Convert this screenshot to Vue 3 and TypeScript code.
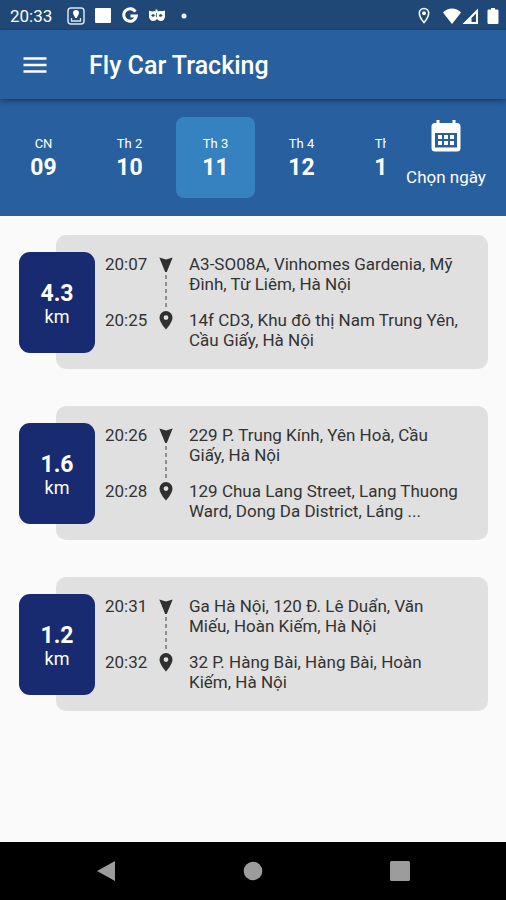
<script setup lang="ts">
import { ref } from 'vue'

interface Day {
  label: string
  date: string
}

interface Stop {
  time: string
  address: string
}

interface Trip {
  distance: string
  from: Stop
  to: Stop
}

const days: Day[] = [
  { label: 'CN', date: '09' },
  { label: 'Th 2', date: '10' },
  { label: 'Th 3', date: '11' },
  { label: 'Th 4', date: '12' },
  { label: 'Th 5', date: '13' },
]

const selected = ref('11')

const trips: Trip[] = [
  {
    distance: '4.3',
    from: { time: '20:07', address: 'A3-SO08A, Vinhomes Gardenia, Mỹ Đình, Từ Liêm, Hà Nội' },
    to: { time: '20:25', address: '14f CD3, Khu đô thị Nam Trung Yên, Cầu Giấy, Hà Nội' },
  },
  {
    distance: '1.6',
    from: { time: '20:26', address: '229 P. Trung Kính, Yên Hoà, Cầu Giấy, Hà Nội' },
    to: { time: '20:28', address: '129 Chua Lang Street, Lang Thuong Ward, Dong Da District, Láng ...' },
  },
  {
    distance: '1.2',
    from: { time: '20:31', address: 'Ga Hà Nội, 120 Đ. Lê Duẩn, Văn Miếu, Hoàn Kiếm, Hà Nội' },
    to: { time: '20:32', address: '32 P. Hàng Bài, Hàng Bài, Hoàn Kiếm, Hà Nội' },
  },
]
</script>

<template>
  <div class="screen">
    <div class="status">
      <span class="clock">20:33</span>
      <div class="notices">
        <svg width="18" height="18" viewBox="0 0 18 18" aria-hidden="true">
          <rect x="1" y="1" width="16" height="16" rx="3" fill="none" stroke="#dbe3ee" stroke-width="1.5" />
          <path d="M9 3a3 3 0 0 1 3 3c0 2-2 3-2 5H8c0-2-2-3-2-5a3 3 0 0 1 3-3z" fill="#fff" />
          <path d="M4.5 11v3h9v-3" fill="none" stroke="#dbe3ee" stroke-width="1.3" />
        </svg>
        <svg width="18" height="18" viewBox="0 0 18 18" aria-hidden="true">
          <rect x="1" y="1" width="16" height="15" rx="1" fill="#fff" />
        </svg>
        <svg width="18" height="18" viewBox="0 0 18 18" aria-hidden="true">
          <path d="M14.4 4.6A6.3 6.3 0 1 0 15.3 9H9.5" fill="none" stroke="#fff" stroke-width="3" />
        </svg>
        <svg width="18" height="18" viewBox="0 0 18 18" aria-hidden="true">
          <path
            d="M1 3.5c2 1 4 1.2 5.5 .5L7.5 4.500V2.500h2V4.500C12 3.500 15 4.500 17 3.500V9c0 3-2 5-4 5-1.600 0-3-1-4-2-1 1-2 2-3.500 2C3 14 1 12 1 9z"
            fill="#fff"
          />
          <path d="M3.500 8.500c1-1.400 2.500-1.400 3.200 0-.7 1.200-2.200 1.200-3.200 0zM11 8.500c.8-1.400 2.300-1.400 3.300 0-1 1.200-2.500 1.200-3.300 0zM8.500 6v4" fill="#1f4877" stroke="#1f4877" stroke-width=".7" />
        </svg>
        <svg width="18" height="18" viewBox="0 0 18 18" aria-hidden="true">
          <circle cx="9" cy="9" r="2.500" fill="#fff" />
        </svg>
      </div>
      <div class="signals">
        <svg class="location" width="12" height="18" viewBox="0 0 12 18" aria-hidden="true">
          <path d="M6 1.500a4.700 4.700 0 0 0-4.700 4.700C1.300 10 6 15.500 6 15.500s4.700-5.500 4.700-9.300A4.700 4.700 0 0 0 6 1.500z" fill="none" stroke="#fff" stroke-width="1.600" />
          <circle cx="6" cy="6.300" r="2" fill="#fff" />
        </svg>
        <svg width="20" height="18" viewBox="0 0 20 18" aria-hidden="true">
          <path d="M1 5.500C6 .3 14 .3 19 5.500L10 17z" fill="#fff" />
        </svg>
        <svg width="17" height="18" viewBox="0 0 17 18" aria-hidden="true">
          <path d="M16 1.500V17H.5z" fill="#fff" />
          <path d="M14 6.500V15H9.500v-4z" fill="#1f4877" />
        </svg>
        <svg class="battery" width="12" height="18" viewBox="0 0 12 18" aria-hidden="true">
          <path d="M4 1h4v1.500h2.300q1.200 0 1.200 1.200v12.100q0 1.200-1.200 1.200H1.700Q.5 17 .5 15.800V3.700q0-1.200 1.200-1.200H4z" fill="#fff" />
        </svg>
      </div>
    </div>

    <header class="bar">
      <button class="menu" type="button" aria-label="Menu">
        <svg width="24" height="18" viewBox="0 0 24 18" aria-hidden="true">
          <path d="M0.500 2.500h23M0.500 9h23M0.500 15.500h23" stroke="#fff" stroke-width="2.600" />
        </svg>
      </button>
      <h1>Fly Car Tracking</h1>
    </header>

    <section class="dates">
      <div class="days">
        <button
          v-for="day in days"
          :key="day.date"
          type="button"
          class="day"
          :class="{ active: day.date === selected }"
          @click="selected = day.date"
        >
          <span class="weekday">{{ day.label }}</span>
          <span class="number">{{ day.date }}</span>
        </button>
      </div>
      <button class="picker" type="button">
        <svg width="30" height="34" viewBox="0 0 30 34" aria-hidden="true">
          <path
            fill="#fff"
            fill-rule="evenodd"
            d="M5.500 1h3v3h13V1h3v3h1.500a3.500 3.500 0 0 1 3.500 3.500v21.500a3.500 3.500 0 0 1-3.500 3.500h-22a3.500 3.500 0 0 1-3.500-3.500v-21.500A3.500 3.500 0 0 1 4 4h1.500zM4 14v14.500h22v-14.500z"
          />
          <path
            fill="#fff"
            d="M7 16h4v4H7zM13 16h4v4h-4zM19 16h4v4h-4zM7 22h4v4H7zM13 22h4v4h-4zM19 22h4v4h-4z"
          />
        </svg>
        <span>Chọn ngày</span>
      </button>
    </section>

    <main class="trips">
      <article v-for="trip in trips" :key="trip.from.time" class="trip">
        <div class="distance">
          <strong>{{ trip.distance }}</strong>
          <span>km</span>
        </div>
        <div class="card">
          <time>{{ trip.from.time }}</time>
          <div class="route">
            <svg width="14" height="76" viewBox="0 0 14 76" aria-hidden="true">
              <path d="M0.300 3.500L7 5.500l6.700-2L7.800 18H6.200z" fill="#303030" />
              <path d="M7 21v35" stroke="#666" stroke-width="1.300" stroke-dasharray="4 3" />
              <path
                fill="#303030"
                fill-rule="evenodd"
                d="M7 57a6.500 6.500 0 0 0-6.500 6.500C.5 68.500 7 75.500 7 75.500s6.500-7 6.500-12A6.500 6.500 0 0 0 7 57zm0 4.200a2.400 2.400 0 1 1 0 4.800 2.400 2.400 0 0 1 0-4.800z"
              />
            </svg>
          </div>
          <p>{{ trip.from.address }}</p>
          <time>{{ trip.to.time }}</time>
          <p>{{ trip.to.address }}</p>
        </div>
      </article>
    </main>

    <nav class="system" aria-label="System">
      <button type="button" aria-label="Back">
        <svg width="20" height="22" viewBox="0 0 20 22" aria-hidden="true">
          <path d="M19 1v20L1 11z" fill="#9c9c9c" />
        </svg>
      </button>
      <button type="button" aria-label="Home">
        <svg width="20" height="20" viewBox="0 0 20 20" aria-hidden="true">
          <circle cx="10" cy="10" r="9.300" fill="#9c9c9c" />
        </svg>
      </button>
      <button type="button" aria-label="Recent apps">
        <svg width="20" height="20" viewBox="0 0 20 20" aria-hidden="true">
          <rect width="20" height="20" rx="1.500" fill="#9c9c9c" />
        </svg>
      </button>
    </nav>
  </div>
</template>

<style>
body {
  margin: 0;
}
</style>

<style scoped>
.screen {
  display: flex;
  flex-direction: column;
  min-height: 100vh;
  background: #fafafa;
  color: #333;
  font-family: Roboto, "Liberation Sans", sans-serif;
}

button {
  margin: 0;
  padding: 0;
  border: 0;
  background: none;
  color: inherit;
  font: inherit;
  cursor: pointer;
}

svg {
  display: block;
}

.status {
  display: flex;
  align-items: center;
  box-sizing: border-box;
  height: 30px;
  padding: 1px 7px 0 10px;
  background: #1f4877;
  color: #fff;
}

.clock {
  flex: 0 0 44px;
  font-size: 17px;
  line-height: 28px;
}

.notices {
  display: flex;
  gap: 9px;
  margin-left: 13px;
}

.signals {
  display: flex;
  margin-left: auto;
}

.location {
  margin-right: 12px;
}

.battery {
  margin-left: 8px;
}

.bar {
  position: relative;
  z-index: 1;
  display: flex;
  align-items: center;
  gap: 42px;
  height: 69px;
  padding: 0 23px;
  background: #285f9f;
  color: #fff;
  box-shadow: 0 2px 5px rgba(0, 0, 0, 0.4);
}

h1 {
  margin: 0;
  padding-top: 2px;
  font-size: 25px;
  font-weight: 500;
  line-height: 32px;
}

.dates {
  display: flex;
  height: 117px;
  background: #285f9f;
  color: #fff;
}

.days {
  display: flex;
  flex: 1;
  gap: 7px;
  min-width: 0;
  overflow: hidden;
  padding: 18px 0 18px 4px;
}

.day {
  display: flex;
  flex: 0 0 79px;
  flex-direction: column;
  align-items: center;
  justify-content: center;
  border-radius: 8px;
}

.day.active {
  background: #3681bf;
}

.weekday {
  font-size: 13px;
  line-height: 20px;
}

.number {
  font-size: 23px;
  font-weight: 700;
  line-height: 28px;
}

.picker {
  display: flex;
  flex: 0 0 120px;
  flex-direction: column;
  align-items: center;
  gap: 10px;
  padding-top: 20px;
  font-size: 17px;
  line-height: 28px;
}

.trips {
  display: flex;
  flex: 1;
  flex-direction: column;
  gap: 37px;
  padding: 19px 18px 37px 19px;
}

.trip {
  display: flex;
  align-items: center;
}

.distance {
  z-index: 1;
  display: flex;
  flex: 0 0 76px;
  flex-direction: column;
  align-items: center;
  justify-content: center;
  box-sizing: border-box;
  height: 101px;
  margin-right: -39px;
  padding-top: 3px;
  border-radius: 11px;
  background: #182b70;
  color: #fff;
  font-size: 18px;
  line-height: 20px;
}

.distance strong {
  font-size: 23px;
  line-height: 26px;
}

.card {
  display: grid;
  flex: 1;
  grid-template-columns: 54px 14px 1fr;
  row-gap: 16px;
  min-width: 0;
  padding: 19px 24px 19px 49px;
  border-radius: 10px;
  background: #e0e0e0;
  font-size: 17px;
  line-height: 20px;
}

.route {
  grid-row: span 2;
}

p {
  min-height: 40px;
  margin: 0 0 0 16px;
}

.system {
  display: flex;
  height: 58px;
  padding: 0 33px;
  background: #000;
}

.system button {
  display: flex;
  flex: 1;
  align-items: center;
  justify-content: center;
}
</style>
